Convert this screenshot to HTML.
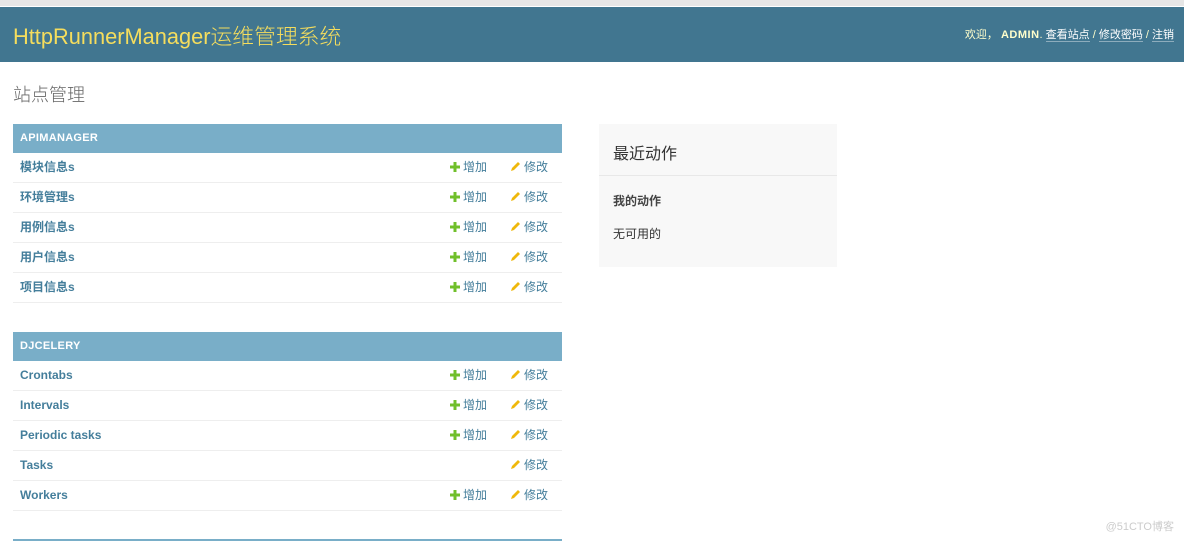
<!DOCTYPE html>
<html><head><meta charset="utf-8"><style>
*{margin:0;padding:0;box-sizing:border-box}
body{width:1184px;height:541px;overflow:hidden;background:#fff;font-family:"Liberation Sans","Noto Sans CJK SC",sans-serif;font-size:12px;color:#333;position:relative}
.topline{position:absolute;left:0;top:0;width:1184px;height:7px;background:#fff;border-top:6px solid #e6e6e6}
#header{position:absolute;left:0;top:7px;width:1184px;height:55px;background:#417690}
#header .brand{position:absolute;left:13px;top:2px;line-height:55px;font-size:21.8px;color:#f5dd5d;font-weight:300}
#header .tools{position:absolute;right:10px;top:1px;line-height:55px;font-size:11px;color:#ffc}
#header .tools b{color:#ffc;letter-spacing:.5px}
#header .tools a{color:#fff;text-decoration:none;border-bottom:1px solid rgba(255,255,255,.4)}
h1{position:absolute;left:13px;top:81px;font-size:18px;font-weight:300;color:#666}
.mod{position:absolute;left:13px;width:549px}
.cap{height:29px;background:#79aec8;color:#fff;font-size:11px;font-weight:bold;padding:0 7px;line-height:29px;letter-spacing:.3px}
.row{height:30px;border-bottom:1px solid #eee;position:relative;line-height:29px}
.row span{position:absolute;top:0}
.row .n{left:7px;font-weight:bold;color:#447e9b;font-size:12px}
.row .add{left:437px;color:#447e9b}
.row .chg{left:497px;color:#447e9b}
svg{vertical-align:-1px;margin-right:3px}
.recent{position:absolute;left:599px;top:124px;width:238px;height:143px;background:#f8f8f8}
.recent h2{font-size:16px;font-weight:400;color:#333;padding:16px 14px 0;height:52px;border-bottom:1px solid #e8e8e8}
.recent h3{font-size:12px;font-weight:bold;color:#444;padding:16px 14px 0}
.recent p{padding:16px 14px 0;font-size:12px;color:#333}
.wm{position:absolute;right:10px;top:518px;font-size:11px;color:#ccc}
</style></head><body>
<div class="topline"></div>
<div id="header"><div class="brand">HttpRunnerManager运维管理系统</div>
<div class="tools">欢迎， <b>ADMIN</b>. <a>查看站点</a> / <a>修改密码</a> / <a>注销</a></div></div>
<h1>站点管理</h1>
<div class="mod" style="top:124px">
<div class="cap">APIMANAGER</div>
<div class="row"><span class="n">模块信息s</span><span class="add"><svg width="10" height="10" viewBox="0 0 10 10"><path d="M3.5 0h3v3.5H10v3H6.5V10h-3V6.5H0v-3h3.5z" fill="#70bf2b"/></svg>增加</span><span class="chg"><svg width="11" height="11" viewBox="0 0 11 11"><path d="M1 10l1-3 6-6 2 2-6 6z" fill="#efb80b"/></svg>修改</span></div>
<div class="row"><span class="n">环境管理s</span><span class="add"><svg width="10" height="10" viewBox="0 0 10 10"><path d="M3.5 0h3v3.5H10v3H6.5V10h-3V6.5H0v-3h3.5z" fill="#70bf2b"/></svg>增加</span><span class="chg"><svg width="11" height="11" viewBox="0 0 11 11"><path d="M1 10l1-3 6-6 2 2-6 6z" fill="#efb80b"/></svg>修改</span></div>
<div class="row"><span class="n">用例信息s</span><span class="add"><svg width="10" height="10" viewBox="0 0 10 10"><path d="M3.5 0h3v3.5H10v3H6.5V10h-3V6.5H0v-3h3.5z" fill="#70bf2b"/></svg>增加</span><span class="chg"><svg width="11" height="11" viewBox="0 0 11 11"><path d="M1 10l1-3 6-6 2 2-6 6z" fill="#efb80b"/></svg>修改</span></div>
<div class="row"><span class="n">用户信息s</span><span class="add"><svg width="10" height="10" viewBox="0 0 10 10"><path d="M3.5 0h3v3.5H10v3H6.5V10h-3V6.5H0v-3h3.5z" fill="#70bf2b"/></svg>增加</span><span class="chg"><svg width="11" height="11" viewBox="0 0 11 11"><path d="M1 10l1-3 6-6 2 2-6 6z" fill="#efb80b"/></svg>修改</span></div>
<div class="row"><span class="n">项目信息s</span><span class="add"><svg width="10" height="10" viewBox="0 0 10 10"><path d="M3.5 0h3v3.5H10v3H6.5V10h-3V6.5H0v-3h3.5z" fill="#70bf2b"/></svg>增加</span><span class="chg"><svg width="11" height="11" viewBox="0 0 11 11"><path d="M1 10l1-3 6-6 2 2-6 6z" fill="#efb80b"/></svg>修改</span></div>
</div>
<div class="mod" style="top:332px">
<div class="cap">DJCELERY</div>
<div class="row"><span class="n">Crontabs</span><span class="add"><svg width="10" height="10" viewBox="0 0 10 10"><path d="M3.5 0h3v3.5H10v3H6.5V10h-3V6.5H0v-3h3.5z" fill="#70bf2b"/></svg>增加</span><span class="chg"><svg width="11" height="11" viewBox="0 0 11 11"><path d="M1 10l1-3 6-6 2 2-6 6z" fill="#efb80b"/></svg>修改</span></div>
<div class="row"><span class="n">Intervals</span><span class="add"><svg width="10" height="10" viewBox="0 0 10 10"><path d="M3.5 0h3v3.5H10v3H6.5V10h-3V6.5H0v-3h3.5z" fill="#70bf2b"/></svg>增加</span><span class="chg"><svg width="11" height="11" viewBox="0 0 11 11"><path d="M1 10l1-3 6-6 2 2-6 6z" fill="#efb80b"/></svg>修改</span></div>
<div class="row"><span class="n">Periodic tasks</span><span class="add"><svg width="10" height="10" viewBox="0 0 10 10"><path d="M3.5 0h3v3.5H10v3H6.5V10h-3V6.5H0v-3h3.5z" fill="#70bf2b"/></svg>增加</span><span class="chg"><svg width="11" height="11" viewBox="0 0 11 11"><path d="M1 10l1-3 6-6 2 2-6 6z" fill="#efb80b"/></svg>修改</span></div>
<div class="row"><span class="n">Tasks</span><span class="chg"><svg width="11" height="11" viewBox="0 0 11 11"><path d="M1 10l1-3 6-6 2 2-6 6z" fill="#efb80b"/></svg>修改</span></div>
<div class="row"><span class="n">Workers</span><span class="add"><svg width="10" height="10" viewBox="0 0 10 10"><path d="M3.5 0h3v3.5H10v3H6.5V10h-3V6.5H0v-3h3.5z" fill="#70bf2b"/></svg>增加</span><span class="chg"><svg width="11" height="11" viewBox="0 0 11 11"><path d="M1 10l1-3 6-6 2 2-6 6z" fill="#efb80b"/></svg>修改</span></div>
</div>
<div class="mod" style="top:539px;height:2px;background:#79aec8"></div>
<div class="recent"><h2>最近动作</h2><h3>我的动作</h3><p>无可用的</p></div>
<div class="wm">@51CTO博客</div>
</body></html>
